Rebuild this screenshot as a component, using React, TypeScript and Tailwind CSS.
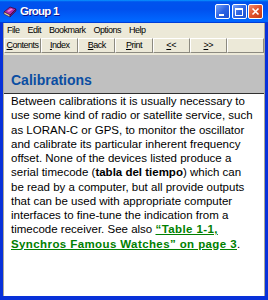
import type { ReactNode } from 'react'

function BookIcon() {
  return (
    <svg width="14" height="13" viewBox="0 0 14 13" className="shrink-0">
      <path d="M1 7 L7 2 L13 4 L7 10 Z" fill="#b02aa8" stroke="#3a0a40" strokeWidth="0.8" />
      <path d="M1 7 L7 10 L7 12 L1 9 Z" fill="#f4e8a0" stroke="#3a0a40" strokeWidth="0.6" />
      <path d="M7 10 L13 4 L13 6 L7 12 Z" fill="#6a1870" stroke="#3a0a40" strokeWidth="0.6" />
      <path d="M4 6 L8 3.5 L10 4.2 L6 7 Z" fill="#f080d8" />
    </svg>
  )
}

function TitleButton({ children, close }: { children: ReactNode; close?: boolean }) {
  return (
    <div
      className={
        'relative w-[15px] h-[15px] rounded-[2px] border border-white ' +
        (close
          ? 'bg-[linear-gradient(135deg,#f08a6c,#e0502a_50%,#c23a14)]'
          : 'bg-[linear-gradient(135deg,#7aa4f6,#2d64e4_50%,#1d4fd0)]')
      }
    >
      {children}
    </div>
  )
}

function ToolButton({ u, rest }: { u?: string; rest?: string }) {
  return (
    <div className="h-[15px] flex items-center justify-center border-t border-l border-white border-r border-b border-r-[#8c8a80] border-b-[#8c8a80] bg-[#ece9d8] text-[9px] tracking-[-0.5px] leading-none text-black">
      {u && <span className="underline">{u}</span>}
      {rest}
    </div>
  )
}

export default function App() {
  return (
    <div className="w-[268px] h-[300px] flex flex-col bg-[#0831d9] overflow-hidden" style={{ fontFamily: '"Liberation Sans", Arial, sans-serif' }}>
      {/* title bar */}
      <div className="h-[23px] shrink-0 flex items-center pl-[3px] pr-[5px] bg-[linear-gradient(180deg,#0997ff,#0053ee_8%,#0050ee_40%,#0066ff_88%,#0066ff_93%,#005bff_95%,#003dd7_96%,#003dd7)]">
        <BookIcon />
        <span className="ml-[3px] text-white font-bold text-[11.5px] tracking-[-0.8px] leading-none [text-shadow:1px_1px_#0f1089]">
          Group 1
        </span>
        <div className="ml-auto flex gap-[1.5px]">
          <TitleButton>
            <div className="absolute left-[3px] bottom-[2px] w-[5px] h-[2px] bg-white" />
          </TitleButton>
          <TitleButton>
            <div className="absolute left-[2.5px] top-[2.5px] w-[8px] h-[8px] border border-white border-t-2" />
          </TitleButton>
          <TitleButton close>
            <svg width="13" height="13" viewBox="0 0 13 13" className="absolute inset-0">
              <path d="M3.5 3.5 L9.5 9.5 M9.5 3.5 L3.5 9.5" stroke="white" strokeWidth="1.6" />
            </svg>
          </TitleButton>
        </div>
      </div>

      <div className="flex-1 flex flex-col mx-[3px] mb-[4px] border-x border-[#aca899] bg-white min-h-0">
        {/* menu */}
        <div className="h-[15px] shrink-0 flex items-center gap-[8px] pl-[3px] bg-[#ece9d8] text-[9px] tracking-[-0.5px] leading-none text-black">
          <span>File</span>
          <span>Edit</span>
          <span>Bookmark</span>
          <span>Options</span>
          <span>Help</span>
        </div>

        {/* toolbar */}
        <div className="h-[17px] shrink-0 grid grid-cols-7 pb-[2px] bg-[#ece9d8]">
          <ToolButton u="C" rest="ontents" />
          <ToolButton u="I" rest="ndex" />
          <ToolButton u="B" rest="ack" />
          <ToolButton u="P" rest="rint" />
          <ToolButton u="<" rest="<" />
          <ToolButton u=">" rest=">" />
          <ToolButton />
        </div>

        {/* heading */}
        <div className="h-[39px] shrink-0 bg-[#c0c0c0] border-b border-[#303030] pl-[7px] pt-[17px]">
          <h1 className="text-[14px] leading-[16px] font-bold text-[#0b4ea2]">Calibrations</h1>
        </div>

        {/* body */}
        <div className="flex-1 pl-[7px] pr-[8px] text-[11.5px] leading-[14.25px] text-black">
          <p>
            Between calibrations it is usually necessary to use some kind of radio or satellite service, such as
            LORAN-C or GPS, to monitor the oscillator and calibrate its particular inherent frequency offset. None of
            the devices listed produce a serial timecode (<b>tabla del tiempo</b>) which can be read by a computer, but
            all provide outputs that can be used with appropriate computer interfaces to fine-tune the indication from
            a timecode receiver. See also{' '}
            <a className="font-bold text-[#008000] underline tracking-[0.4px]">
              “Table 1-1, Synchros Famous Watches” on page 3
            </a>
            .
          </p>
        </div>
      </div>
    </div>
  )
}
